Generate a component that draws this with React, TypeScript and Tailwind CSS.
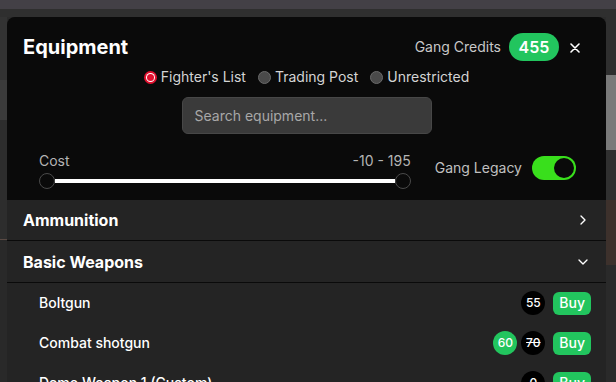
import React from "react";

const items = [
  { name: "Boltgun", cost: 55 },
  { name: "Combat shotgun", cost: 70, discount: 60 },
  { name: "Demo Weapon 1 (Custom)", cost: 0 },
];

const Radio = ({ label, checked }: { label: string; checked?: boolean }) => (
  <label className="flex items-center gap-1">
    {checked ? (
      <span className="w-[13px] h-[13px] rounded-full bg-[#e0102e] flex items-center justify-center">
        <span className="w-[9px] h-[9px] rounded-full bg-white flex items-center justify-center">
          <span className="w-[7px] h-[7px] rounded-full bg-[#e0102e]" />
        </span>
      </span>
    ) : (
      <span className="w-[13px] h-[13px] rounded-full bg-[#4a4a4a] border border-[#6a6a6a]" />
    )}
    <span className="text-sm text-[#d4d4d4]">{label}</span>
  </label>
);

const Chevron = ({ down }: { down?: boolean }) => (
  <svg width="16" height="16" viewBox="0 0 24 24" fill="none" stroke="white" strokeWidth="2" strokeLinecap="round" strokeLinejoin="round">
    {down ? <path d="M6 9l6 6 6-6" /> : <path d="M9 6l6 6-6 6" />}
  </svg>
);

const App = () => {
  return (
    <div className="relative w-[616px] h-[382px] overflow-hidden bg-[#2b2b2b]" style={{ fontFamily: "Inter, 'Noto Sans', sans-serif" }}>
      {/* page behind the dialog */}
      <div className="flex flex-col h-full">
        <div className="h-[9px] bg-[#434046]" />
        <div className="h-[8px] bg-[#2f2f2f]" />
        <div className="flex flex-1">
          <div className="w-[7px] flex flex-col">
            <div className="h-[63px] bg-[#333333]" />
            <div className="h-[40px] bg-[#3b3b3b]" />
            <div className="h-[120px] bg-[#2d2d2d] border-b border-[#5a4a44]" />
            <div className="flex-1 bg-[#292929]" />
          </div>
          <div className="flex-1" />
          <div className="w-[10px] flex flex-col">
            <div className="h-[58px] bg-[#2f2f2f]" />
            <div className="h-[75px] bg-[#7a7a7a]" />
            <div className="h-[50px] bg-[#303030]" />
            <div className="h-[65px] bg-[#3d312c]" />
            <div className="flex-1 bg-[#2a2a2a]" />
          </div>
        </div>
      </div>

      {/* dialog */}
      <div className="absolute left-[7px] top-[17px] w-[599px] h-[400px] rounded-t-lg overflow-hidden bg-[#242424] flex flex-col">
        <div className="bg-[#0a0a0a] pt-4 pb-[11px]">
          <div className="flex items-center justify-between pl-4 pr-[26px] h-[28px]">
            <h2 className="text-xl font-bold text-white">Equipment</h2>
            <div className="flex items-center">
              <span className="text-sm text-[#c8c8c8]">Gang Credits</span>
              <span className="ml-2 h-[28px] w-[50px] rounded-full bg-[#22c55e] text-white text-base font-semibold flex items-center justify-center">455</span>
              <svg className="ml-[11px] mt-0.5" width="10" height="10" viewBox="0 0 10 10" stroke="white" strokeWidth="1.6" strokeLinecap="round">
                <path d="M1 1l8 8M9 1l-8 8" />
              </svg>
            </div>
          </div>
          <div className="flex justify-center gap-3 mt-1.5 h-5 items-center">
            <Radio label="Fighter's List" checked />
            <Radio label="Trading Post" />
            <Radio label="Unrestricted" />
          </div>
          <div className="flex justify-center mt-[10px]">
            <div className="w-[250px] h-[37px] rounded-md bg-[#3a3a3a] border border-[#474747] flex items-center px-3 text-sm text-[#a8a8a8]">
              Search equipment...
            </div>
          </div>
          <div className="flex items-center gap-[24px] pl-8 pr-[30px] mt-[17px]">
            <div className="flex-1">
              <div className="flex justify-between text-sm text-[#b4b4b4]">
                <span>Cost</span>
                <span>-10 - 195</span>
              </div>
              <div className="flex items-center h-4 mt-0.5">
                <span className="w-4 h-4 rounded-full bg-[#0a0a0a] border border-[#4a4a4a]" />
                <span className="flex-1 h-1 bg-white" />
                <span className="w-4 h-4 rounded-full bg-[#0a0a0a] border border-[#4a4a4a]" />
              </div>
            </div>
            <div className="flex items-center gap-[10px] -mt-1">
              <span className="text-sm text-[#c0c0c0]">Gang Legacy</span>
              <span className="w-[44px] h-[24px] rounded-full bg-[#39df1c] flex items-center justify-end pr-[2px]">
                <span className="w-5 h-5 rounded-full bg-[#0a0a0a]" />
              </span>
            </div>
          </div>
        </div>

        <div className="flex items-center justify-between h-[41px] pl-4 pr-[15px] border-b border-[#0a0a0a]">
          <span className="text-base font-bold text-white">Ammunition</span>
          <Chevron />
        </div>
        <div className="flex items-center justify-between h-[42px] pl-4 pr-[15px] border-b border-[#0a0a0a]">
          <span className="text-base font-bold text-white">Basic Weapons</span>
          <Chevron down />
        </div>
        {items.map((it) => (
          <div key={it.name} className="flex items-center justify-between h-10 pl-8 pr-[15px]">
            <span className="text-sm font-medium text-white">{it.name}</span>
            <div className="flex items-center">
              {it.discount !== undefined && (
                <span className="w-6 h-6 rounded-full bg-[#22c55e] text-white text-xs font-medium flex items-center justify-center mr-1">{it.discount}</span>
              )}
              <span className={`w-6 h-6 rounded-full bg-black text-white text-xs font-medium flex items-center justify-center ${it.discount !== undefined ? "line-through" : ""}`}>{it.cost}</span>
              <span className="ml-2 h-[23px] px-1.5 rounded-md bg-[#22c55e] text-white text-sm font-medium flex items-center">Buy</span>
            </div>
          </div>
        ))}
      </div>
    </div>
  );
};

export default App;
